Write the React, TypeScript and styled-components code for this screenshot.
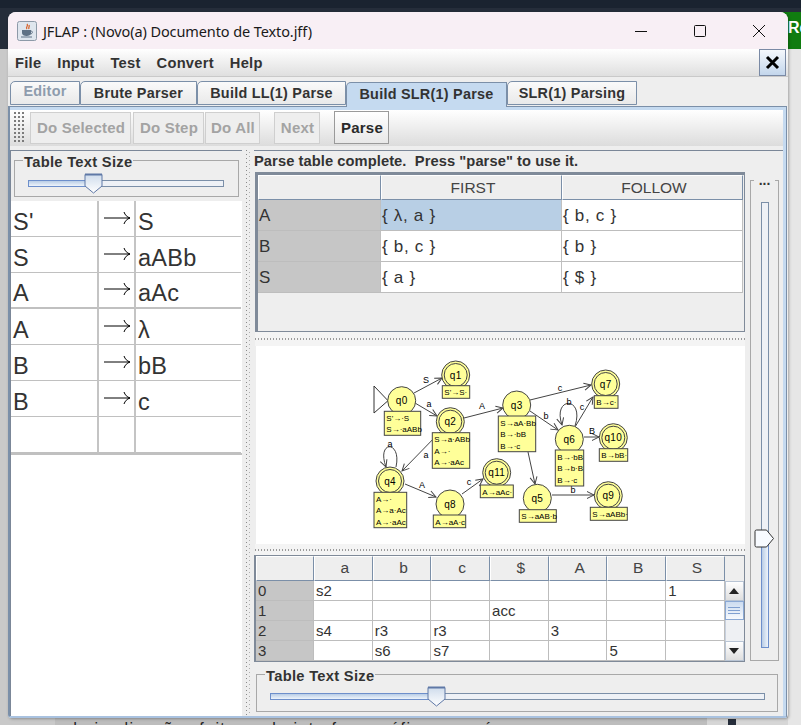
import React from "react";
import styled, { createGlobalStyle } from "styled-components";

const Global = createGlobalStyle`
  html, body { margin: 0; padding: 0; background: #c9c9c9; overflow: hidden; }
  * { box-sizing: border-box; }
  body { font-family: "Liberation Sans", Arial, sans-serif; }
`;

const Desktop = styled.div`
  position: relative;
  width: 801px;
  height: 725px;
  overflow: hidden;
  padding: 12px 0 0 8px;
  background: #c9c9c9;
`;
const TopStrip = styled.div`
  position: absolute;
  left: 0;
  right: 0;
  top: 0;
  height: 49px;
  background: linear-gradient(#1a2330 0 8px, #252d3a 8px);
`;
const GreenTag = styled.div`
  position: absolute;
  right: 0;
  top: 12px;
  width: 64px;
  height: 37px;
  background: #107c10;
  color: #fff;
  font: bold 16px "Liberation Sans", sans-serif;
  padding: 7px 0 0 51px;
`;
const RightStrip = styled.div`
  position: absolute;
  right: 0;
  top: 49px;
  bottom: 0;
  width: 13px;
  background: #e6e6e6;
`;
const BottomGray = styled.div`
  position: absolute;
  left: 55px;
  top: 718px;
  width: 652px;
  height: 7px;
  background: #bdbdbd;
`;
const BottomMid = styled.div`
  position: absolute;
  left: 707px;
  top: 718px;
  width: 81px;
  height: 7px;
  background: #d6d6d6;
  &::after {
    content: "";
    position: absolute;
    left: 21px;
    top: 1px;
    width: 8px;
    height: 6px;
    background: #252d3a;
  }
`;
const BottomText = styled.div`
  position: absolute;
  left: 68px;
  top: 720px;
  white-space: nowrap;
  font: 16px "Liberation Sans", sans-serif;
  letter-spacing: 1.4px;
  color: #222;
`;
const Window = styled.div`
  position: relative;
  width: 780px;
  height: 706px;
  border-radius: 8px 8px 4px 4px;
  overflow: hidden;
  background: #eeeeee;
  box-shadow: 1px 1px 3px rgba(0, 0, 0, 0.3);
  display: flex;
  flex-direction: column;
`;
const TitleBar = styled.div`
  height: 37px;
  background: #f8eff5;
  display: flex;
  align-items: center;
  padding: 0 0 0 9px;
  flex: none;
`;
const TitleText = styled.div`
  font: 14.5px "Noto Sans", sans-serif;
  color: #1a1a1a;
  margin-left: 6px;
  flex: 1;
  letter-spacing: -0.1px;
`;
const WinBtn = styled.div`
  width: 59px;
  height: 37px;
  display: flex;
  align-items: center;
  justify-content: center;
`;
const MenuBar = styled.div`
  height: 28px;
  flex: none;
  display: flex;
  align-items: center;
  padding: 0 2px 0 7px;
  background: linear-gradient(#ffffff, #dfdfdf);
  border-bottom: 1px solid #c9c9c9;
`;
const MenuItem = styled.span`
  font: bold 14.7px "Liberation Sans", sans-serif;
  color: #333;
  margin-right: 16px;
  letter-spacing: 0.25px;
`;
const CloseBtn = styled.div`
  margin-left: auto;
  width: 27px;
  height: 27px;
  border: 1px solid #7a8aa5;
  background: linear-gradient(#f5f8fc, #c3d6ec);
  display: flex;
  align-items: center;
  justify-content: center;
`;
const TabRow = styled.div`
  height: 29px;
  flex: none;
  display: flex;
  align-items: flex-end;
  padding: 4px 0 0 2px;
  background: #eeeeee;
`;
const Tab = styled.div<{ $w: number; $active?: boolean; $disabled?: boolean }>`
  width: ${(p) => p.$w}px;
  height: ${(p) => (p.$active ? 25 : 24)}px;
  margin-bottom: ${(p) => (p.$active ? -1 : 1)}px;
  border: 1px solid #7b8fa8;
  border-bottom: ${(p) => (p.$active ? "none" : "1px solid #7b8fa8")};
  border-radius: 5px 0 0 0;
  background: ${(p) => (p.$active ? "#c5daf0" : "linear-gradient(#fafafa, #e9e9e9)")};
  font: bold 14.4px "Liberation Sans", sans-serif;
  letter-spacing: 0.25px;
  color: ${(p) => (p.$disabled ? "#8e9cad" : "#333")};
  text-align: center;
  line-height: ${(p) => (p.$disabled ? 19 : p.$active ? 22 : 23)}px;
  position: relative;
  z-index: ${(p) => (p.$active ? 2 : 1)};
`;
const Pane = styled.div`
  flex: 1;
  min-height: 0;
  border: 1px solid #7b8fa8;
  border-bottom: 2px solid #a9c2e0;
  margin-right: 1px;
  border-left-width: 2px;
  background: #c5daf0;
  padding: 3px 3px 0 0;
  display: flex;
  flex-direction: column;
`;
const Toolbar = styled.div`
  height: 36px;
  flex: none;
  display: flex;
  align-items: center;
  padding: 0 0 1px 3px;
  background: linear-gradient(#ffffff, #dcdcdc);
`;
const Grip = styled.div`
  width: 13px;
  height: 33px;
  margin-right: 4px;
  background-image: radial-gradient(#777 0.7px, transparent 0.9px);
  background-size: 4px 4px;
`;
const ToolButton = styled.div<{ $w: number; $on?: boolean; $gap?: number }>`
  width: ${(p) => p.$w}px;
  height: ${(p) => (p.$on ? 33 : 32)}px;
  margin-right: ${(p) => p.$gap ?? 2}px;
  border: 1px solid ${(p) => (p.$on ? "#9a9a9a" : "#cfcfcf")};
  background: ${(p) => (p.$on ? "linear-gradient(#fff, #e8e8e8)" : "#eeeeee")};
  font: bold 15px "Liberation Sans", sans-serif;
  letter-spacing: 0.2px;
  padding-left: 1px;
  color: ${(p) => (p.$on ? "#2a2a2a" : "#a3a3a3")};
  display: flex;
  align-items: center;
  justify-content: center;
`;
const Body = styled.div`
  flex: 1;
  min-height: 0;
  background: #eeeeee;
  padding-top: 4px;
  display: flex;
`;
const LeftPanel = styled.div`
  width: 232px;
  flex: none;
  border-top: 1px solid #7b8798;
  border-left: 1px solid #7b8798;
  display: flex;
  flex-direction: column;
  background: #fff;
`;
const SliderBlock = styled.div`
  background: #eeeeee;
  height: 50px;
  padding: 9px 3px 3px 3px;
  flex: none;
`;
const Group = styled.fieldset<{ $h: number }>`
  margin: 0;
  height: ${(p) => p.$h}px;
  border: 1px solid #a8a8a8;
  padding: 0;
  position: relative;
`;
const GroupTitle = styled.span`
  position: absolute;
  left: 8px;
  top: -7px;
  padding: 0 1px;
  background: #eeeeee;
  font: bold 14.7px "Liberation Sans", sans-serif;
  letter-spacing: 0.3px;
  color: #333;
  line-height: 16px;
`;
const Track = styled.div<{ $w: number; $pct: number; $top: number }>`
  position: absolute;
  left: 13px;
  top: ${(p) => p.$top}px;
  width: ${(p) => p.$w}px;
  height: 7px;
  border: 1px solid #7b8fa8;
  background: #eef1f6;
  &::before {
    content: "";
    position: absolute;
    left: -1px;
    top: -1px;
    bottom: -1px;
    width: ${(p) => p.$pct}px;
    border: 1px solid #6d8fcb;
    background: linear-gradient(#b9cde6, #eef4fb);
  }
`;
const ThumbBox = styled.svg<{ $x: number; $y: number }>`
  position: absolute;
  left: ${(p) => p.$x}px;
  top: ${(p) => p.$y}px;
`;
const ProdTable = styled.div`
  display: grid;
  grid-template-columns: 88px 37px 105px;
  border-bottom: 2px solid #c0c0c0;
`;
const ProdCell = styled.div<{ $thick?: boolean }>`
  height: 36px;
  border-right: 2px solid #c4c4c4;
  border-bottom: ${(p) => (p.$thick ? 2 : 1)}px solid #c0c0c0;
  font: 23.5px "Liberation Sans", sans-serif;
  color: #333;
  padding: 6px 0 0 2px;
  line-height: 28px;
  display: flex;
  align-items: center;
  overflow: hidden;
  &:nth-child(3n) {
    border-right: none;
  }
`;
const ProdText = styled.span`
  letter-spacing: 0.3px;
`;
const ArrowCell = styled(ProdCell)`
  padding: 0 0 2px 5px;
`;
const VDivider = styled.div`
  width: 11px;
  flex: none;
  background-image:
    repeating-linear-gradient(#8a8a8a 0 1px, transparent 1px 4px),
    repeating-linear-gradient(transparent 0 2px, #b0b0b0 2px 3px, transparent 3px 4px);
  background-size: 1px 100%, 1px 100%;
  background-repeat: no-repeat;
  background-position: 4px 0, 7px 0;
`;
const RightPanel = styled.div`
  width: 492px;
  flex: none;
  display: flex;
  flex-direction: column;
`;
const Message = styled.div`
  height: 22px;
  flex: none;
  border-top: 1px solid #7b8798;
  margin-left: 1px;
  font: bold 14.7px "Liberation Sans", sans-serif;
  letter-spacing: 0.07px;
  color: #333;
  line-height: 21px;
  white-space: nowrap;
`;
const FirstTable = styled.div`
  height: 160px;
  flex: none;
  margin-left: 2px;
  border: 3px solid #7f8a99;
  border-right: 1px solid #7f8a99;
  border-bottom: 1px solid #7f8a99;
  background: #eeeeee;
`;
const FGrid = styled.div`
  display: grid;
  grid-template-columns: 123px 181px 181px;
  width: 485px;
`;
const Header = styled.div<{ $h: number; $pb: number }>`
  height: ${(p) => p.$h}px;
  background: #eeeeee;
  border-left: 1px solid #fff;
  border-top: 1px solid #fff;
  border-right: 1px solid #7b8fa8;
  border-bottom: 1px solid #7b8fa8;
  font: 15.5px "Liberation Sans", sans-serif;
  color: #444;
  display: flex;
  align-items: flex-end;
  justify-content: center;
  padding: 0 0 ${(p) => p.$pb}px 3px;
`;
const FCell = styled.div<{ $kind?: "row" | "sel" }>`
  height: 31px;
  background: ${(p) => (p.$kind === "row" ? "#c6c6c6" : p.$kind === "sel" ? "#b8cfe5" : "#fff")};
  border-right: 1px solid #c0c0c0;
  border-bottom: 1px solid #bdbdbd;
  font: 17px "Liberation Sans", sans-serif;
  letter-spacing: ${(p) => (p.$kind === "row" ? 0 : 0.7)}px;
  color: #333;
  padding: 2px 0 0 1px;
  display: flex;
  align-items: center;
`;
const HSplit = styled.div<{ $h: number }>`
  height: ${(p) => p.$h}px;
  flex: none;
  margin-left: 2px;
  background-color: #f4f4f4;
  background-image: repeating-linear-gradient(90deg, #9a9a9a 0 1px, transparent 1px 3px);
  background-size: 100% 2px;
  background-repeat: no-repeat;
  background-position: 0 center;
`;
const GraphArea = styled.div`
  height: 198px;
  flex: none;
  background: #fff;
  margin-left: 3px;
`;
const LRTableWrap = styled.div`
  height: 107px;
  flex: none;
  margin-left: 1px;
  border: 1px solid #7f8a99;
  border-left-width: 2px;
  display: flex;
  position: relative;
`;
const LRGrid = styled.div`
  display: grid;
  grid-template-columns: 58px repeat(7, 58.7px);
  grid-template-rows: 25px repeat(4, 20px);
  width: 469px;
`;
const LRCell = styled.div<{ $row?: boolean }>`
  background: ${(p) => (p.$row ? "#c6c6c6" : "#fff")};
  border-right: 1px solid #bdbdbd;
  border-bottom: 1px solid #bdbdbd;
  font: 15px "Liberation Sans", sans-serif;
  color: #333;
  padding-left: 2px;
  line-height: 20px;
`;
const ScrollBar = styled.div`
  width: 20px;
  display: flex;
  flex-direction: column;
  margin-top: 25px;
  background: #e8e8e8;
`;
const ScrollBtn = styled.div`
  height: 20px;
  background: linear-gradient(#fff, #dedede);
  border: 1px solid #b8c4d4;
  display: flex;
  align-items: center;
  justify-content: center;
`;
const ScrollThumb = styled.div`
  height: 19px;
  background: linear-gradient(#ccdcf0, #f6f9fd);
  border: 1px solid #8aa8d4;
  display: flex;
  flex-direction: column;
  gap: 2px;
  align-items: center;
  justify-content: center;
  span {
    display: block;
    width: 12px;
    height: 1px;
    background: #7f9fd0;
  }
`;
const ScrollFill = styled.div`
  flex: 1;
  background: #eef0f3;
  border-left: 1px solid #c6d0de;
`;
const BottomSlider = styled.div`
  height: 50px;
  flex: none;
  padding: 12px 0 0 3px;
  width: 525px;
`;
const VSliderCol = styled.div`
  width: 38px;
  flex: none;
  border-top: 1px solid #7b8798;
  padding: 29px 4px 0 5px;
`;
const VGroup = styled.div`
  height: 481px;
  position: relative;
  border: 1px solid #a8a8a8;
`;
const VGap = styled.span`
  position: absolute;
  left: 3px;
  top: -1px;
  width: 21px;
  height: 9px;
  text-align: center;
  background: #eeeeee;
  font: bold 14px "Liberation Sans", sans-serif;
  line-height: 1px;
  color: #333;
`;
const VTrack = styled.div`
  position: absolute;
  left: 10px;
  top: 21px;
  width: 8px;
  height: 446px;
  border: 1px solid #7b8fa8;
  background: #eef1f6;
  &::after {
    content: "";
    position: absolute;
    left: -1px;
    right: -1px;
    bottom: -1px;
    height: 112px;
    border: 1px solid #6d8fcb;
    background: linear-gradient(90deg, #b9cde6, #eef4fb);
  }
`;

const JavaIcon = () => (
  <svg width="20" height="20" viewBox="0 0 20 20">
    <rect x="0.5" y="0.5" width="19" height="19" rx="2" fill="#dfe6ee" stroke="#8d9aa8" />
    <path d="M10 3c2 2-2 3 0 5M12 4c1 2-1 2 0 4" stroke="#d8622a" strokeWidth="1.3" fill="none" />
    <path d="M5 9h9v3c0 2-2 3-4.500 3S5 14 5 12z" fill="#5f7185" />
    <path d="M14 10c2 0 2 3-1 3" stroke="#5f7185" fill="none" />
    <path d="M4 16h11" stroke="#5f7185" strokeWidth="1.200" />
  </svg>
);

const HThumb = ({ x, y }: { x: number; y: number }) => (
  <ThumbBox $x={x} $y={y} width="19" height="21" viewBox="0 0 19 21">
    <defs>
      <linearGradient id="thumbV" x1="0" x2="0" y1="0" y2="1">
        <stop offset="0" stopColor="#cfdcec" />
        <stop offset="1" stopColor="#ffffff" />
      </linearGradient>
    </defs>
    <path d="M1 1.500h17v11.500l-8.500 7-8.500-7z" fill="url(#thumbV)" stroke="#5f78a6" />
    <path d="M1 1.500h17" stroke="#5f78a6" strokeWidth="2" />
  </ThumbBox>
);

const VThumb = () => (
  <ThumbBox $x={3} $y={348} width="21" height="19" viewBox="0 0 21 19">
    <path d="M2.500 1h10l7 8.500-7 8.500h-10q-1.500 0-1.500-1.500v-14q0-1.500 1.500-1.500z" fill="#f8fbff" stroke="#333" />
  </ThumbBox>
);

const Arrow = () => (
  <svg width="27" height="14" viewBox="0 0 27 14">
    <path d="M0 7h26M20 1c1 3 3 5 6 6-3 1-5 3-6 6" stroke="#000" strokeWidth="1" fill="none" />
  </svg>
);

type St = {
  id: string;
  x: number;
  y: number;
  final?: boolean;
  box: [number, number, number, number];
  lines: string[];
};

const states: St[] = [
  { id: "q0", x: 401.7, y: 400.7, box: [384.3, 411.3, 420.7, 435.3], lines: ["S'→·S", "S→·aABb"] },
  { id: "q1", x: 455.7, y: 375, final: true, box: [442.3, 385.7, 469.7, 398.3], lines: ["S'→S·"] },
  { id: "q2", x: 450.3, y: 421.7, final: true, box: [432.3, 432.7, 469.7, 468.3], lines: ["S→a·ABb", "A→·", "A→·aAc"] },
  { id: "q4", x: 390, y: 481, final: true, box: [374, 492.3, 406.7, 527.7], lines: ["A→·", "A→a·Ac", "A→·aAc"] },
  { id: "q8", x: 450, y: 504, box: [433.3, 515, 465.7, 527.7], lines: ["A→aA·c"] },
  { id: "q11", x: 496.7, y: 472.7, final: true, box: [480.3, 485, 513.3, 497.7], lines: ["A→aAc·"] },
  { id: "q3", x: 516.7, y: 405, box: [498.3, 416, 535.7, 451.7], lines: ["S→aA·Bb", "B→·bB", "B→·c"] },
  { id: "q7", x: 605.7, y: 384, final: true, box: [594.3, 395.7, 618, 408.3], lines: ["B→c·"] },
  { id: "q6", x: 569.3, y: 439.3, box: [555.3, 450, 583.7, 486], lines: ["B→·bB", "B→b·B", "B→·c"] },
  { id: "q10", x: 613.3, y: 437.7, final: true, box: [599.3, 448.7, 627.7, 461.3], lines: ["B→bB·"] },
  { id: "q5", x: 537.3, y: 498.3, box: [519.3, 509.7, 556.3, 522.3], lines: ["S→aAB·b"] },
  { id: "q9", x: 608.3, y: 495.7, final: true, box: [590.3, 507.3, 627.3, 520.3], lines: ["S→aABb·"] },
];

const edges: { d: string; l: string; x: number; y: number; tip: [number, number, number] }[] = [
  { d: "M414 393L442 378", l: "S", x: 426, y: 383, tip: [442, 378, -28] },
  { d: "M415 403L437 416", l: "a", x: 429, y: 407, tip: [437, 416, 30] },
  { d: "M464 418L503 408", l: "A", x: 482, y: 409, tip: [503, 408, -14] },
  { d: "M440 432L402 471", l: "a", x: 426, y: 458, tip: [402, 471, 134] },
  { d: "M405 484L436 497", l: "A", x: 422, y: 488, tip: [436, 497, 23] },
  { d: "M462 494L483 479", l: "c", x: 469, y: 485, tip: [483, 479, -36] },
  { d: "M530 400L591 385", l: "c", x: 560, y: 391, tip: [591, 385, -14] },
  { d: "M530 411L558 430", l: "b", x: 546, y: 419, tip: [558, 430, 33] },
  { d: "M528 452L535 484", l: "", x: 0, y: 0, tip: [535, 484, 78] },
  { d: "M575 427L593 397", l: "c", x: 582, y: 410, tip: [593, 397, -58] },
  { d: "M584 437L599 437", l: "B", x: 592, y: 434, tip: [599, 437, 0] },
  { d: "M552 495L594 495", l: "b", x: 573, y: 493, tip: [594, 495, 0] },
  { d: "M575 426C585 396 552 396 562 425", l: "b", x: 569, y: 405, tip: [562, 425, 75] },
  { d: "M396 467C402 440 376 440 386 467", l: "a", x: 390, y: 447, tip: [386, 467, 70] },
];

const Diagram = () => (
  <svg width="489" height="198" viewBox="256 346 489 198" style={{ display: "block" }}>
    <path d="M374 386L388 400.700L374 413z" fill="none" stroke="#333" />
    {edges.map((e, i) => (
      <g key={i}>
        <path d={e.d} fill="none" stroke="#444" />
        <path
          d="M-7 -3.500L0 0L-7 3.500"
          fill="none"
          stroke="#444"
          transform={`translate(${e.tip[0]} ${e.tip[1]}) rotate(${e.tip[2]})`}
        />
        {e.l && (
          <text x={e.x} y={e.y} fontFamily="Liberation Sans" fontSize="9" fill="#000" textAnchor="middle">
            {e.l}
          </text>
        )}
      </g>
    ))}
    {states.map((s) => (
      <g key={s.id}>
        <circle cx={s.x} cy={s.y} r="14" fill="#ffff99" stroke="#444" />
        {s.final && <circle cx={s.x} cy={s.y} r="11.500" fill="none" stroke="#444" />}
        <text
          x={s.x}
          y={s.y + 3.500}
          fontFamily="Liberation Sans"
          fontSize="10"
          fill="#000"
          textAnchor="middle"
          letterSpacing="0.3"
        >
          {s.id}
        </text>
        <rect
          x={s.box[0]}
          y={s.box[1]}
          width={s.box[2] - s.box[0]}
          height={s.box[3] - s.box[1]}
          fill="#ffff99"
          stroke="#444"
        />
        {s.lines.map((l, i) => (
          <text
            key={i}
            x={s.box[0] + 2}
            y={s.box[1] + 9.500 + i * 11.500}
            fontFamily="Liberation Sans"
            fontSize="8"
            fill="#000"
          >
            {l}
          </text>
        ))}
      </g>
    ))}
  </svg>
);

const prods: [string, string][] = [
  ["S'", "S"],
  ["S", "aABb"],
  ["A", "aAc"],
  ["A", "λ"],
  ["B", "bB"],
  ["B", "c"],
  ["", ""],
];

const first = [
  ["A", "{ λ, a }", "{ b, c }"],
  ["B", "{ b, c }", "{ b }"],
  ["S", "{ a }", "{ $ }"],
];

const cols = ["", "a", "b", "c", "$", "A", "B", "S"];
const lr = [
  ["0", "s2", "", "", "", "", "", "1"],
  ["1", "", "", "", "acc", "", "", ""],
  ["2", "s4", "r3", "r3", "", "3", "", ""],
  ["3", "", "s6", "s7", "", "", "5", ""],
];

export default function App() {
  return (
    <Desktop>
      <Global />
      <TopStrip />
      <GreenTag>Re</GreenTag>
      <RightStrip />
      <BottomGray />
      <BottomMid />
      <BottomText>de implicações feitas pela interface gráfica, mas é</BottomText>
      <Window>
        <TitleBar>
          <JavaIcon />
          <TitleText>JFLAP : (Novo(a) Documento de Texto.jff)</TitleText>
          <WinBtn>
            <svg width="14" height="14" viewBox="0 0 14 14">
              <path d="M1 7.500h12" stroke="#111" />
            </svg>
          </WinBtn>
          <WinBtn>
            <svg width="14" height="14" viewBox="0 0 14 14">
              <rect x="1.500" y="1.500" width="11" height="11" rx="1" fill="none" stroke="#111" />
            </svg>
          </WinBtn>
          <WinBtn>
            <svg width="14" height="14" viewBox="0 0 14 14">
              <path d="M1 1l12 12M13 1L1 13" stroke="#111" />
            </svg>
          </WinBtn>
        </TitleBar>
        <MenuBar>
          {["File", "Input", "Test", "Convert", "Help"].map((m) => (
            <MenuItem key={m}>{m}</MenuItem>
          ))}
          <CloseBtn>
            <svg width="15" height="15" viewBox="0 0 15 15">
              <path d="M2 2l11 11M13 2L2 13" stroke="#000" strokeWidth="3" />
            </svg>
          </CloseBtn>
        </MenuBar>
        <TabRow>
          <Tab $w={70} $disabled>Editor</Tab>
          <Tab $w={117}>Brute Parser</Tab>
          <Tab $w={149}>Build LL(1) Parse</Tab>
          <Tab $w={161} $active>Build SLR(1) Parse</Tab>
          <Tab $w={130}>SLR(1) Parsing</Tab>
        </TabRow>
        <Pane>
          <Toolbar>
            <Grip />
            <ToolButton $w={101}>Do Selected</ToolButton>
            <ToolButton $w={71} $gap={1}>Do Step</ToolButton>
            <ToolButton $w={55} $gap={14}>Do All</ToolButton>
            <ToolButton $w={46} $gap={14}>Next</ToolButton>
            <ToolButton $w={55} $on>Parse</ToolButton>
          </Toolbar>
          <Body>
            <LeftPanel>
              <SliderBlock>
                <Group $h={37}>
                  <GroupTitle>Table Text Size</GroupTitle>
                  <Track $w={196} $pct={60} $top={19} />
                  <HThumb x={69} y={12} />
                </Group>
              </SliderBlock>
              <ProdTable>
                {prods.map(([l, r], i) => (
                  <React.Fragment key={i}>
                    <ProdCell $thick={i === 2}><ProdText>{l}</ProdText></ProdCell>
                    <ArrowCell $thick={i === 2}>{i < 6 && <Arrow />}</ArrowCell>
                    <ProdCell $thick={i === 2}><ProdText>{r}</ProdText></ProdCell>
                  </React.Fragment>
                ))}
              </ProdTable>
            </LeftPanel>
            <VDivider />
            <RightPanel>
              <Message>Parse table complete.&nbsp; Press "parse" to use it.</Message>
              <FirstTable>
                <FGrid>
                  <Header $h={25} $pb={2} />
                  <Header $h={25} $pb={2}>FIRST</Header>
                  <Header $h={25} $pb={2}>FOLLOW</Header>
                  {first.map((r, i) => (
                    <React.Fragment key={r[0]}>
                      <FCell $kind="row">{r[0]}</FCell>
                      <FCell $kind={i === 0 ? "sel" : undefined}>{r[1]}</FCell>
                      <FCell>{r[2]}</FCell>
                    </React.Fragment>
                  ))}
                </FGrid>
              </FirstTable>
              <HSplit $h={14} />
              <GraphArea>
                <Diagram />
              </GraphArea>
              <HSplit $h={11} />
              <LRTableWrap>
                <LRGrid>
                  {cols.map((c, i) => (
                    <Header $h={25} $pb={3} key={i}>{c}</Header>
                  ))}
                  {lr.map((r) =>
                    r.map((c, j) => (
                      <LRCell key={`${r[0]}-${j}`} $row={j === 0}>{c}</LRCell>
                    )),
                  )}
                </LRGrid>
                <ScrollBar>
                  <ScrollBtn>
                    <svg width="10" height="6" viewBox="0 0 10 6"><path d="M5 0l5 6H0z" fill="#222" /></svg>
                  </ScrollBtn>
                  <ScrollThumb><span /><span /><span /></ScrollThumb>
                  <ScrollFill />
                  <ScrollBtn>
                    <svg width="10" height="6" viewBox="0 0 10 6"><path d="M0 0h10L5 6z" fill="#222" /></svg>
                  </ScrollBtn>
                </ScrollBar>
              </LRTableWrap>
              <BottomSlider>
                <Group $h={38}>
                  <GroupTitle>Table Text Size</GroupTitle>
                  <Track $w={495} $pct={165} $top={18} />
                  <HThumb x={170} y={11} />
                </Group>
              </BottomSlider>
            </RightPanel>
            <VSliderCol>
              <VGroup>
                <VGap>...</VGap>
                <VTrack />
                <VThumb />
              </VGroup>
            </VSliderCol>
          </Body>
        </Pane>
      </Window>
    </Desktop>
  );
}
